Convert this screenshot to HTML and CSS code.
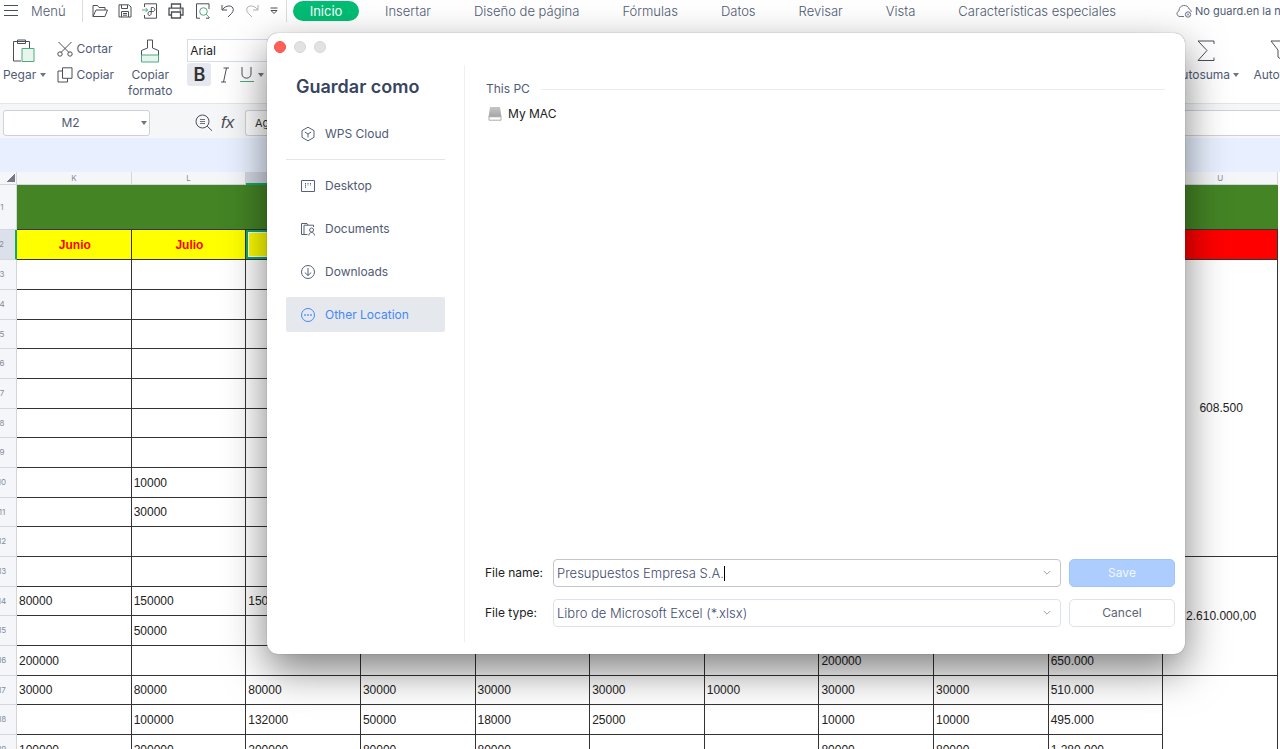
FILE: index.html
```html
<!DOCTYPE html>
<html lang="es">
<head>
<meta charset="utf-8">
<title>Presupuestos Empresa S.A.</title>
<link rel="stylesheet" href="styles.css">
</head>
<body>
<div class="app">
  <header class="menubar">
    <button class="menu-button">
      <svg width="14" height="14" viewBox="0 0 14 14"><path d="M0 1.500h14M0 6.500h14M0 11.500h14"/></svg>
      <span>Menú</span>
    </button>
    <div class="quick">
      <button aria-label="Abrir"><svg width="16" height="14" viewBox="0 0 16 14"><path d="M1 12.500V1.500h4.500l1.500 2h6V6M1 12.500 4 6h11.500l-2.600 6.500z"/></svg></button>
      <button aria-label="Guardar"><svg width="14" height="14" viewBox="0 0 14 14"><path d="M1 .8h9.500L13 3v10H1zM3.500 1v3.500h6V1M3.500 13V7.500h7V13M5 9.500h4M5 11.200h4"/></svg></button>
      <button aria-label="Exportar a PDF"><svg width="16" height="16" viewBox="0 0 16 16"><path d="M2.500 4V.8h12v14.400h-12V12M7.500 12.500c2.200 0 1.800-4 1.800-8h1.500c2.700 0 2.700 4 0 4H8c-2.600 0-2.600 4-.5 4"/><path class="green" d="M0 7h5.500M3.500 4.800 5.700 7 3.500 9.200"/></svg></button>
      <button aria-label="Imprimir"><svg width="16" height="16" viewBox="0 0 16 16"><path d="M3.500 5V1h9v4M3.500 12H1V5.200h14V12h-2.500M3.500 9h9v6h-9z" stroke-width="1.300"/><path d="M11.500 7h2"/></svg></button>
      <button aria-label="Vista previa"><svg width="16" height="16" viewBox="0 0 16 16"><path d="M5 15.200H1.500V.8H14V6M14 14v1.200h-3"/><circle class="green" cx="8.500" cy="8.500" r="3.800"/><path class="green" d="m11.300 11.300 3 3.200"/></svg></button>
      <button aria-label="Deshacer"><svg width="14" height="14" viewBox="0 0 14 14"><path d="M1 1v5h5M1.300 5.800C5 .5 12 1 12.300 5.500c0 3-2.500 4.500-5.300 7.500"/></svg></button>
      <button class="faded" aria-label="Rehacer"><svg width="14" height="14" viewBox="0 0 14 14"><path d="M13 1v5H8M12.700 5.800C9 .5 2 1 1.700 5.500c0 3 2.500 4.500 5.300 7.500"/></svg></button>
      <button aria-label="Más"><svg width="10" height="8" viewBox="0 0 10 8"><path d="M1.500 1h7M2 3.500 5 6.500l3-3z"/></svg></button>
    </div>
    <nav class="tabs">
      <button class="tab tab-active">Inicio</button>
      <button class="tab">Insertar</button>
      <button class="tab">Diseño de página</button>
      <button class="tab">Fórmulas</button>
      <button class="tab">Datos</button>
      <button class="tab">Revisar</button>
      <button class="tab">Vista</button>
      <button class="tab">Características especiales</button>
    </nav>
    <div class="cloud">
      <svg width="17" height="14" viewBox="0 0 17 14"><path d="M8 12.500H4C.5 12.500 0 8 3 6.800 3 0 12 0 13 5c1.500.5 2.300 1.500 2.200 3"/><circle cx="12" cy="10.500" r="2.700"/><path d="m11 9.500 2 2m0-2-2 2"/></svg>
      <span>No guard.en la nube</span>
    </div>
  </header>

  <section class="ribbon">
    <button class="tool">
      <svg width="24" height="24" viewBox="0 0 24 24"><path d="M9 22H1.500V2.500h16V9M5.500 1h8v3.500h-8z"/><path class="green mint" d="M10 9.500h12v13H10z"/></svg>
      <span>Pegar <i class="down"></i></span>
    </button>
    <div class="stack">
      <button><svg width="16" height="16" viewBox="0 0 16 16"><path d="M1.500 1 12 11.500M14.500 1 4 11.500"/><circle cx="3" cy="13" r="2.200"/><circle cx="13" cy="13" r="2.200"/></svg>Cortar</button>
      <button><svg width="16" height="16" viewBox="0 0 16 16"><path d="M5.500.8h9.500v10.500H5.500zM5.500 4H1v11h9.500v-3.500"/></svg>Copiar</button>
    </div>
    <button class="tool tool-format">
      <svg width="20" height="24" viewBox="0 0 20 24"><path d="M1.500 16v-4.500l6-2.500V1h5v8l6 2.500V16"/><path class="green mint" d="M1.500 16h17v7h-17z"/></svg>
      <span>Copiar<br>formato</span>
    </button>
    <div class="font-group">
      <input class="font-name" aria-label="Fuente" value="Arial">
      <div class="font-style">
        <button class="bold" aria-label="Negrita">B</button>
        <button aria-label="Cursiva"><svg width="10" height="16" viewBox="0 0 10 16"><path d="M3.500 1H9M1 15h5M6.500 1l-3 14"/></svg></button>
        <button aria-label="Subrayado"><svg width="16" height="16" viewBox="0 0 16 16"><path d="M3 0v7c0 5.500 9 5.500 9 0V0"/><path class="green" d="M1 14.500h14"/></svg><i class="down"></i></button>
      </div>
    </div>
    <div class="ribbon-end">
      <button class="tool"><svg width="20" height="24" viewBox="0 0 20 24"><path d="M18 5V2H2l9 9.500L2 21.500h16v-3"/></svg><span>Autosuma <i class="down"></i></span></button>
      <button class="tool"><svg width="20" height="24" viewBox="0 0 20 24"><path d="M1 2h18l-7 9v10l-4-3v-7z"/></svg><span>Autofiltro</span></button>
    </div>
  </section>

  <section class="formula-bar">
    <div class="name-box"><input aria-label="Celda" value="M2"><i class="down"></i></div>
    <div class="formula-icons">
      <svg width="18" height="18" viewBox="0 0 18 18"><circle cx="7.500" cy="7.500" r="6.500"/><path d="m12.200 12.200 4.800 4.600"/><path d="M5 5.500h5M5 7.500h5M5 9.500h5" stroke-width=".8"/></svg>
      <span class="fx">fx</span>
    </div>
    <input class="formula" aria-label="Fórmula" value="Agosto">
  </section>
  <div class="band"></div>

  <main class="sheet">
    <table>
      <colgroup><col class="col-index"><col span="11"></colgroup>
      <thead>
        <tr><th class="corner"><i></i></th><th>K</th><th>L</th><th class="selected">M</th><th>N</th><th>O</th><th>P</th><th>Q</th><th>R</th><th>S</th><th>T</th><th>U</th></tr>
      </thead>
      <tbody>
        <tr class="title-row"><th>1</th><td colspan="11"></td></tr>
        <tr class="month-row"><th class="selected">2</th><td>Junio</td><td>Julio</td><td class="active-cell"></td><td></td><td></td><td></td><td></td><td></td><td></td><td></td><td class="red"></td></tr>
        <tr><th>3</th><td></td><td></td><td></td><td></td><td></td><td></td><td></td><td></td><td></td><td></td><td class="total" rowspan="10">608.500</td></tr>
        <tr><th>4</th><td></td><td></td><td></td><td></td><td></td><td></td><td></td><td></td><td></td><td></td></tr>
        <tr><th>5</th><td></td><td></td><td></td><td></td><td></td><td></td><td></td><td></td><td></td><td></td></tr>
        <tr><th>6</th><td></td><td></td><td></td><td></td><td></td><td></td><td></td><td></td><td></td><td></td></tr>
        <tr><th>7</th><td></td><td></td><td></td><td></td><td></td><td></td><td></td><td></td><td></td><td></td></tr>
        <tr><th>8</th><td></td><td></td><td></td><td></td><td></td><td></td><td></td><td></td><td></td><td></td></tr>
        <tr><th>9</th><td></td><td></td><td></td><td></td><td></td><td></td><td></td><td></td><td></td><td></td></tr>
        <tr><th>10</th><td></td><td>10000</td><td></td><td></td><td></td><td></td><td></td><td></td><td></td><td></td></tr>
        <tr><th>11</th><td></td><td>30000</td><td></td><td></td><td></td><td></td><td></td><td></td><td></td><td></td></tr>
        <tr><th>12</th><td></td><td></td><td></td><td></td><td></td><td></td><td></td><td></td><td></td><td></td></tr>
        <tr><th>13</th><td></td><td></td><td></td><td></td><td></td><td></td><td></td><td></td><td></td><td></td><td class="total" rowspan="4">2.610.000,00</td></tr>
        <tr><th>14</th><td>80000</td><td>150000</td><td>150000</td><td></td><td></td><td></td><td></td><td></td><td></td><td></td></tr>
        <tr><th>15</th><td></td><td>50000</td><td></td><td></td><td></td><td></td><td></td><td></td><td></td><td></td></tr>
        <tr><th>16</th><td>200000</td><td></td><td></td><td></td><td></td><td></td><td></td><td>200000</td><td></td><td>650.000</td></tr>
        <tr><th>17</th><td>30000</td><td>80000</td><td>80000</td><td>30000</td><td>30000</td><td>30000</td><td>10000</td><td>30000</td><td>30000</td><td>510.000</td><td class="total" rowspan="3"></td></tr>
        <tr><th>18</th><td></td><td>100000</td><td>132000</td><td>50000</td><td>18000</td><td>25000</td><td></td><td>10000</td><td>10000</td><td>495.000</td></tr>
        <tr><th>19</th><td>100000</td><td>200000</td><td>200000</td><td>80000</td><td>80000</td><td></td><td></td><td>80000</td><td>80000</td><td>1.280.000</td></tr>
      </tbody>
    </table>
  </main>
</div>

<div class="dialog" role="dialog" aria-labelledby="dialog-title">
  <div class="lights">
    <button class="light light-close" aria-label="Cerrar"></button>
    <button class="light" aria-label="Minimizar"></button>
    <button class="light" aria-label="Ampliar"></button>
  </div>
  <div class="dialog-body">
    <aside class="places">
      <h1 id="dialog-title">Guardar como</h1>
      <button class="place">
        <svg width="16" height="16" viewBox="0 0 16 16"><path d="m8 1.200 6 3.400v6.800l-6 3.400-6-3.400V4.600zM4.800 6 8 8l3.200-2M8 8v3.500"/></svg>WPS Cloud
      </button>
      <hr>
      <div class="place-list">
        <button class="place">
          <svg width="16" height="16" viewBox="0 0 16 16"><path d="M1.500 2.500h13v11h-13z"/><path d="M5.500 5v5M8 5v2.500M10.500 5v2.500" stroke-dasharray="1.500 .6"/></svg>Desktop
        </button>
        <button class="place">
          <svg width="16" height="16" viewBox="0 0 16 16"><path d="M4 13.500H1.500v-11H7l1 1.500M7.500 13.500H4V4.200h9.500V6M8.800 14.500c0-4 5.700-4 5.700 0"/><circle cx="11.600" cy="9" r="2"/></svg>Documents
        </button>
        <button class="place">
          <svg width="16" height="16" viewBox="0 0 16 16"><circle cx="8" cy="8" r="6.500"/><path d="M8 4v7.500M4.800 8.500 8 11.500l3.200-3"/></svg>Downloads
        </button>
        <button class="place place-active">
          <svg width="16" height="16" viewBox="0 0 16 16"><circle cx="8" cy="8" r="6.500"/><path d="M4.200 8h1.600M7.200 8h1.600M10.200 8h1.600" stroke-width="1.600"/></svg>Other Location
        </button>
      </div>
    </aside>
    <section class="browser">
      <h2>This PC</h2>
      <button class="drive">
        <svg width="14" height="14" viewBox="0 0 14 14"><defs><linearGradient id="disk" x2="0" y2="1"><stop offset="0" stop-color="#c6c6c6"/><stop offset="1" stop-color="#a4a4a4"/></linearGradient></defs><path d="M2 0h10l1.500 10H.5z" fill="url(#disk)" stroke="none"/><path d="M1 9.800h12v3.400H1z" fill="#fff" stroke="#aaa"/></svg>My MAC
      </button>
      <form class="file-form">
        <label for="file-name">File name:</label>
        <div class="field field-focus">
          <input id="file-name" value="Presupuestos Empresa S.A." size="21"><span class="caret"></span>
          <svg class="chevron" width="8" height="6" viewBox="0 0 8 6"><path d="m.8 1 3.200 3.200L7.200 1"/></svg>
        </div>
        <button type="button" class="save">Save</button>
        <label for="file-type">File type:</label>
        <div class="field">
          <select id="file-type"><option>Libro de Microsoft Excel (*.xlsx)</option></select>
          <svg class="chevron" width="8" height="6" viewBox="0 0 8 6"><path d="m.8 1 3.200 3.200L7.200 1"/></svg>
        </div>
        <button type="button" class="cancel">Cancel</button>
      </form>
    </section>
  </div>
</div>
</body>
</html>
```

FILE: styles.css
```css
* { box-sizing: border-box; }

body {
  margin: 0;
  height: 100vh;
  overflow: hidden;
  position: relative;
  background: #fff;
  color: #4f5b74;
  font: 12px/16px Inter, "Liberation Sans", sans-serif;
}

button, input, select {
  font: inherit;
  color: inherit;
  background: none;
  border: 0;
  padding: 0;
  margin: 0;
  outline: 0;
  white-space: nowrap;
}

svg {
  display: block;
  flex: none;
  fill: none;
  stroke: #4b4f57;
  stroke-width: 1;
}

.green { stroke: #4fa980; }
.mint { fill: #e8f5ef; }

.down {
  display: inline-block;
  border: 3px solid transparent;
  border-top: 4px solid #6b7588;
  border-bottom: 0;
  vertical-align: 2px;
}

.app {
  height: 100vh;
  display: flex;
  flex-direction: column;
  overflow: hidden;
}

/* Menu bar */
.menubar {
  flex: none;
  display: flex;
  align-items: center;
  height: 22px;
  padding-left: 4px;
  overflow: hidden;
  font-weight: 300;
}

.menu-button {
  display: flex;
  align-items: center;
  gap: 13px;
  width: 79px;
  height: 22px;
  border-right: 1px solid #dcdcdc;
  font-size: 13px;
  flex: none;
}

.quick {
  flex: none;
  display: flex;
  align-items: center;
  justify-content: space-between;
  width: 204px;
  height: 22px;
  padding: 0 7px 0 9px;
  border-right: 1px solid #dcdcdc;
}

.faded { opacity: .45; }

.tabs {
  flex: none;
  display: flex;
  align-items: center;
  gap: 43px;
  padding-left: 6px;
}

.tab { font-size: 13px; }

.tab-active {
  width: 66px;
  height: 20px;
  margin-right: -17px;
  border-radius: 10px;
  background: #02bd74;
  color: #fff;
  font-weight: 400;
}

.cloud {
  flex: 1;
  display: flex;
  align-items: center;
  gap: 2px;
  margin-left: 60px;
  font-size: 11px;
  font-weight: 400;
  white-space: nowrap;
}

.cloud svg { stroke: #6b7588; }

/* Ribbon */
.ribbon {
  flex: none;
  display: flex;
  align-items: flex-start;
  height: 82px;
  padding: 17px 0 0 3px;
  border-bottom: 1px solid #e2e4e8;
  overflow: hidden;
}

.tool {
  display: flex;
  flex-direction: column;
  align-items: center;
  gap: 4px;
  flex: none;
}

.tool-format { margin-left: 14px; }

.stack {
  display: flex;
  flex-direction: column;
  gap: 10px;
  margin-left: 11px;
  padding-top: 2px;
}

.stack button {
  display: flex;
  align-items: center;
  gap: 4px;
}

.font-group { margin-left: 15px; }

.font-name {
  display: block;
  width: 130px;
  height: 23px;
  padding-left: 2px;
  border: 1px solid #d5dcec;
  color: #222;
}

.font-style {
  display: flex;
  align-items: center;
  gap: 9px;
  margin-top: 1px;
}

.font-style button {
  display: flex;
  align-items: center;
  gap: 3px;
}

.font-style .bold {
  width: 24px;
  height: 23px;
  justify-content: center;
  border-radius: 3px;
  background: #e5e8ee;
  color: #333;
  font-size: 18px;
  font-weight: 600;
}

.ribbon-end {
  display: flex;
  gap: 14px;
  width: 107px;
  margin-left: auto;
}

/* Formula bar */
.formula-bar {
  flex: none;
  display: flex;
  align-items: center;
  height: 34px;
  padding: 4px 0 0 3px;
  background: #f5f6f8;
}

.name-box {
  display: flex;
  align-items: center;
  width: 147px;
  height: 26px;
  padding-right: 2px;
  border: 1px solid #cfd1d6;
  border-radius: 3px;
  background: #fff;
}

.name-box input {
  flex: 1;
  min-width: 0;
  padding-right: 4px;
  text-align: center;
}

.formula-icons {
  display: flex;
  align-items: center;
  gap: 8px;
  width: 95px;
  padding-left: 45px;
}

.fx {
  color: #4b4f57;
  font: italic 17px/20px "Liberation Sans", sans-serif;
}

.formula {
  flex: 1;
  height: 26px;
  padding-left: 9px;
  border: 1px solid #cfd1d6;
  border-right: 0;
  border-radius: 3px 0 0 3px;
  background: #fff;
  color: #333;
  font-size: 11px;
}

.band {
  flex: none;
  height: 34px;
  background: #e8f0ff;
}

/* Sheet: the row index column runs past the left edge */
.sheet {
  flex: 1;
  min-height: 0;
  overflow: hidden;
}

.sheet table {
  width: calc(100% + 10px);
  margin-left: -12px;
  table-layout: fixed;
  border-collapse: separate;
  border-spacing: 0;
}

.col-index { width: 29px; }

.sheet th {
  height: 29px;
  padding: 0;
  border-right: 1px solid #d4d6db;
  border-bottom: 1px solid #d4d6db;
  background: #f5f6f9;
  color: #858b98;
  font-size: 8px;
  line-height: 11px;
  font-weight: 400;
}

.sheet thead th { height: 13px; }

.sheet thead th.selected {
  background: #d5d9e3;
  border-bottom: 2px solid #12a86c;
}

.sheet tbody th.selected {
  background: #dce0eb;
  border-right: 2px solid #12a86c;
}

.corner i {
  display: block;
  margin-left: 19px;
  width: 8px;
  height: 8px;
  background: linear-gradient(135deg, transparent 50%, #747982 50%);
}

.sheet tbody tr { height: 30px; }
.sheet tbody tr:nth-child(3n + 5) { height: 29px; }

.sheet td {
  padding: 0 0 0 2px;
  border-right: 1px solid #333;
  border-bottom: 1px solid #333;
  color: #222;
  font: 12px/16px "Liberation Sans", sans-serif;
}

.sheet .title-row { height: 45px; }
.sheet .title-row td { background: #448425; border-right: 0; }

.sheet .month-row td {
  background: #ff0;
  color: #f00;
  font-weight: 700;
  text-align: center;
}

.sheet .month-row .active-cell { box-shadow: inset 0 0 0 2px #12a86c, inset 0 0 0 3px #fff; }
.sheet .month-row .red { background: #f00; }
.sheet .total { text-align: center; }

/* Save dialog, over the spreadsheet */
.dialog {
  position: absolute;
  top: 33px;
  left: 267px;
  right: 95px;
  padding-bottom: 12px;
  border-radius: 11px;
  background: #fff;
  box-shadow: 0 0 1px rgba(0, 0, 0, .5), 0 16px 42px rgba(0, 0, 0, .5);
  font-size: 13px;
}

.lights {
  display: flex;
  gap: 8px;
  padding: 8px 0 12px 7px;
}

.light {
  width: 12px;
  height: 12px;
  border: 1px solid #d6d6d6;
  border-radius: 50%;
  background: #e2e2e2;
}

.light-close { background: #fe5f57; border-color: #f0544c; }

.dialog-body {
  display: grid;
  grid-template-columns: 198px 1fr;
  min-height: 577px;
}

.places {
  padding: 11px 19px 0;
  border-right: 1px solid #f0f0f2;
}

h1 {
  margin: 0 0 18px 10px;
  color: #37445f;
  font-size: 18px;
  line-height: 22px;
  font-weight: 600;
}

.place {
  display: flex;
  align-items: center;
  gap: 9px;
  width: 100%;
  height: 35px;
  padding-left: 14px;
  border-radius: 2px;
  font-size: 12px;
}

.place svg { stroke: #55617a; }

.place-active { background: #e5e8ed; color: #4589f5; }
.place-active svg { stroke: #4589f5; }

hr {
  margin: 8px 0;
  border: 0;
  border-top: 1px solid #e2e4e8;
}

.place-list {
  display: flex;
  flex-direction: column;
  gap: 8px;
}

.browser {
  display: flex;
  flex-direction: column;
  padding: 16px 10px 15px 20px;
}

h2 {
  display: flex;
  align-items: center;
  gap: 11px;
  margin: 0 10px 9px 1px;
  font-size: 12px;
  line-height: 16px;
  font-weight: 400;
}

h2::after {
  content: "";
  flex: 1;
  height: 1px;
  background: #ececee;
}

.drive {
  display: flex;
  align-items: center;
  align-self: flex-start;
  gap: 6px;
  margin-left: 3px;
  color: #222;
  font-size: 12px;
}

.file-form {
  display: grid;
  grid-template-columns: 60px 1fr 106px;
  align-items: center;
  gap: 12px 8px;
  margin-top: auto;
  color: #222;
  font-size: 12px;
}

.field {
  display: flex;
  align-items: center;
  height: 28px;
  padding: 0 9px 0 3px;
  border: 1px solid #dde3ee;
  border-radius: 4px;
  color: #3f4c70;
  font-size: 13px;
  font-weight: 300;
}

.field-focus { border-color: #c3c6ce; }

.field input { field-sizing: content; }

.field select {
  flex: 1;
  min-width: 0;
  appearance: none;
}

.caret {
  width: 1px;
  height: 15px;
  background: #000;
}

.chevron { margin-left: auto; stroke: #9a9fa9; }

.save, .cancel {
  height: 28px;
  border: 1px solid #e0e2e6;
  border-radius: 5px;
  color: #5b6473;
}

.save {
  border-color: #9fc3fc;
  background: #adcdff;
  color: #f2f7ff;
}
```
